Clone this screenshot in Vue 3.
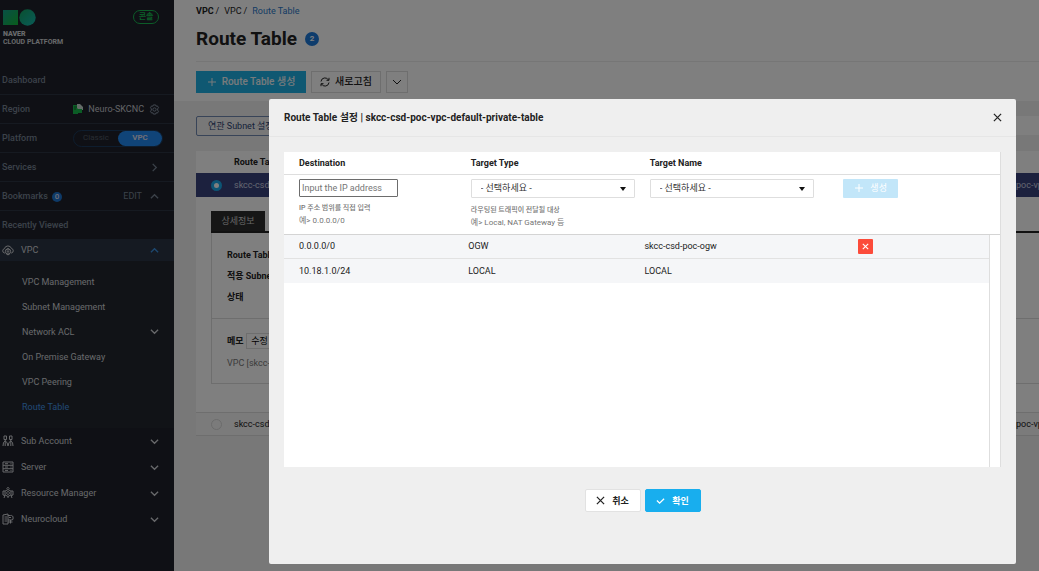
<template>
  <div class="page">
    <aside class="sidebar">
      <div class="brand">
        <div class="brand-top">
          <svg class="logo" viewBox="0 0 33 17">
            <defs>
              <linearGradient id="logoSquare" x1="0" y1="0" x2="1" y2="1">
                <stop offset="0" stop-color="#12a08c" />
                <stop offset="1" stop-color="#12b838" />
              </linearGradient>
              <linearGradient id="logoCircle" x1="0" y1="0" x2="1" y2="1">
                <stop offset="0" stop-color="#12a060" />
                <stop offset="1" stop-color="#14b8b0" />
              </linearGradient>
            </defs>
            <rect x="0" y="1" width="15" height="15" fill="url(#logoSquare)" />
            <circle cx="24.500" cy="8.500" r="8.200" fill="url(#logoCircle)" />
          </svg>
          <a href="#" class="console">콘솔</a>
        </div>
        <strong>NAVER</strong>
        <span>CLOUD PLATFORM</span>
      </div>

      <div class="side-row dashboard">Dashboard</div>
      <div class="side-row">
        <span>Region</span>
        <span class="region">
          <svg class="region-icon" viewBox="0 0 10 10">
            <path d="M0 1h5v9H0z" fill="#16b84a" />
            <path d="M4 0h3l3 3v3H6L4 4z" fill="#c8d8d0" />
            <path d="M4 5h5v4H4z" fill="#16b84a" />
            <path d="M1 3h3M1 5h2" stroke="#0b6a2c" />
          </svg>
          Neuro-SKCNC
          <svg class="gear" viewBox="0 0 12 12">
            <path d="M4.800 1h2.400l.5 1.400 1.500-.3 1.200 2-1 1.200v1.400l1 1.200-1.200 2-1.500-.3-.5 1.400H4.800l-.5-1.400-1.500.3-1.200-2 1-1.200V5.300l-1-1.200 1.200-2 1.500.3z" />
            <circle cx="6" cy="6" r="1.800" />
          </svg>
        </span>
      </div>
      <div class="side-row">
        <span>Platform</span>
        <span class="platform">
          <button type="button">Classic</button>
          <button type="button" class="on">VPC</button>
        </span>
      </div>
      <div class="side-row">
        <span>Services</span>
        <svg class="chevron" viewBox="0 0 10 10"><path d="M3 1l4 4-4 4" /></svg>
      </div>
      <div class="side-row">
        <span>Bookmarks <i class="count">0</i></span>
        <span class="edit">
          EDIT
          <svg class="chevron" viewBox="0 0 10 10"><path d="M1 7l4-4 4 4" /></svg>
        </span>
      </div>
      <div class="side-row">Recently Viewed</div>

      <a href="#" class="menu-item active">
        <svg class="menu-icon" viewBox="0 0 12 12">
          <path d="M3 9H2.500A2.200 2.200 0 0 1 2.400 4.700 3.700 3.700 0 0 1 9.500 4.500 2.300 2.300 0 0 1 9.400 9H9" />
          <circle cx="6" cy="7.500" r="2.600" />
          <circle cx="6" cy="7.500" r=".8" />
          <path d="M3.500 6.200L6 4.500l2.500 1.700M4 9.500l2 1.500 2-1.500" />
        </svg>
        <span>VPC</span>
        <svg class="chevron" viewBox="0 0 10 10"><path d="M1 7l4-4 4 4" /></svg>
      </a>
      <nav class="submenu">
        <a v-for="item in submenu" :key="item.name" href="#" :class="{ current: item.current }">
          {{ item.name }}
          <svg v-if="item.children" class="chevron" viewBox="0 0 10 10"><path d="M1 3l4 4 4-4" /></svg>
        </a>
      </nav>
      <a v-for="item in menu" :key="item.name" href="#" class="menu-item">
        <svg class="menu-icon" viewBox="0 0 12 12">
          <path v-for="(d, i) in item.icon" :key="i" :d="d" />
        </svg>
        <span>{{ item.name }}</span>
        <svg class="chevron" viewBox="0 0 10 10"><path d="M1 3l4 4 4-4" /></svg>
      </a>
    </aside>

    <main class="main">
      <header class="top">
        <div class="breadcrumb">
          <b>VPC</b><i>/</i><span>VPC</span><i>/</i><a href="#">Route Table</a>
        </div>
        <h1>Route Table <span class="badge">2</span></h1>
        <div class="toolbar">
          <button type="button" class="create">
            <svg viewBox="0 0 10 10"><path d="M5 1v8M1 5h8" /></svg>
            Route Table 생성
          </button>
          <button type="button" class="reload">
            <svg viewBox="0 0 10 10">
              <path d="M1 4.500a4 4 0 0 1 7.500-1.500M9 5.500a4 4 0 0 1-7.500 1.500M9 .8v2.500H6.500M1 9.200V6.700h2.500" />
            </svg>
            새로고침
          </button>
          <button type="button" class="more" aria-label="더보기">
            <svg viewBox="0 0 10 10"><path d="M1 3l4 4 4-4" /></svg>
          </button>
        </div>
      </header>

      <section class="content">
        <div class="filters">
          <button type="button" class="subnet">연관 Subnet 설정</button>
          <div class="search"></div>
        </div>
        <div class="list">
          <div class="list-head">Route Table</div>
          <div class="list-row selected">
            <input type="radio" name="route" aria-label="skcc-csd" checked />
            <span>skcc-csd</span>
            <span class="vpc-name">poc-vp</span>
          </div>
          <div class="detail">
            <div class="tabs"><button type="button">상세정보</button></div>
            <div class="detail-body">
              <div class="info">
                <b>Route Table</b>
                <b>적용 Subnet</b>
                <b>상태</b>
              </div>
              <div class="memo">
                <div><b>메모</b><button type="button">수정</button></div>
                <p>VPC [skcc-</p>
              </div>
            </div>
          </div>
          <div class="list-row">
            <input type="radio" name="route" aria-label="skcc-csd" />
            <span>skcc-csd</span>
            <span class="vpc-name">poc-vp</span>
          </div>
        </div>
      </section>
    </main>

    <div class="backdrop">
      <div class="modal" role="dialog" aria-labelledby="modalTitle">
        <div class="modal-head">
          <h2 id="modalTitle">Route Table 설정 | skcc-csd-poc-vpc-default-private-table</h2>
          <button type="button" aria-label="닫기">
            <svg viewBox="0 0 10 10"><path d="M1 1l8 8M9 1L1 9" /></svg>
          </button>
        </div>
        <div class="modal-body">
          <div class="rules">
            <table class="rule-form">
              <thead>
                <tr>
                  <th><label for="destination">Destination</label></th>
                  <th><label for="targetType">Target Type</label></th>
                  <th><label for="targetName">Target Name</label></th>
                  <th></th>
                </tr>
              </thead>
              <tbody>
                <tr>
                  <td>
                    <input id="destination" v-model="destination" type="text" placeholder="Input the IP address" />
                    <p class="desc">IP 주소 범위를 직접 입력</p>
                    <p>예&gt; 0.0.0.0/0</p>
                  </td>
                  <td>
                    <div class="select">
                      <select id="targetType">
                        <option>- 선택하세요 -</option>
                      </select>
                      <svg viewBox="0 0 6 4"><path d="M0 0h6L3 4z" /></svg>
                    </div>
                    <p class="desc">라우팅된 트래픽이 전달될 대상</p>
                    <p>예&gt; Local, NAT Gateway 등</p>
                  </td>
                  <td>
                    <div class="select">
                      <select id="targetName">
                        <option>- 선택하세요 -</option>
                      </select>
                      <svg viewBox="0 0 6 4"><path d="M0 0h6L3 4z" /></svg>
                    </div>
                  </td>
                  <td>
                    <button type="button" class="add" disabled>
                      <svg viewBox="0 0 10 10"><path d="M5 1v8M1 5h8" /></svg>
                      생성
                    </button>
                  </td>
                </tr>
              </tbody>
            </table>
            <div class="rule-scroll">
              <table class="rule-list">
                <tbody>
                  <tr v-for="rule in rules" :key="rule.destination">
                    <td>{{ rule.destination }}</td>
                    <td>{{ rule.type }}</td>
                    <td>{{ rule.name }}</td>
                    <td>
                      <button v-if="rule.removable" type="button" aria-label="삭제" @click="removeRule(rule)">
                        <svg viewBox="0 0 10 10"><path d="M2 2l6 6M8 2L2 8" /></svg>
                      </button>
                    </td>
                  </tr>
                </tbody>
              </table>
            </div>
          </div>
          <div class="actions">
            <button type="button">
              <svg viewBox="0 0 10 10"><path d="M1 1l8 8M9 1L1 9" /></svg>
              취소
            </button>
            <button type="button" class="confirm">
              <svg viewBox="0 0 10 10"><path d="M1 5l3 3 5-5" /></svg>
              확인
            </button>
          </div>
        </div>
      </div>
    </div>
  </div>
</template>

<script setup>
import { ref } from 'vue'

const destination = ref('')

const submenu = [
  { name: 'VPC Management' },
  { name: 'Subnet Management' },
  { name: 'Network ACL', children: true },
  { name: 'On Premise Gateway' },
  { name: 'VPC Peering' },
  { name: 'Route Table', current: true }
]

const menu = [
  {
    name: 'Sub Account',
    icon: [
      'M2 1h2.500v3.500H2zM7.500 1H10v3.500H7.500z',
      'M1 11l.5-3.500L3.200 6 5 7.500 6 11M11 11l-.5-3.500L8.800 6 7 7.500 6 11',
      'M3.200 4.500V11M8.800 4.500V11'
    ]
  },
  {
    name: 'Server',
    icon: ['M1 1h10v10H1z', 'M1 4.300h10M1 7.700h10', 'M3 2.700h3M3 6h3M3 9.400h3M8.500 2.700h1M8.500 6h1M8.500 9.400h1']
  },
  {
    name: 'Resource Manager',
    icon: [
      'M6 2.500l3 1.700v3.600L6 9.500 3 7.800V4.200z',
      'M6 4.600a1.400 1.400 0 1 0 .1 0z',
      'M4.500 1.500L6 .5l1.500 1M1 8V4h2M11 8V4H9M1 8l2 .5M11 8l-2 .5M3 8.500L2 11M9 8.500l1 2.500M6 9.500V11'
    ]
  },
  {
    name: 'Neurocloud',
    icon: [
      'M1 2l5-1v10H1z',
      'M2.500 4H5M2.500 6H5M2.500 8H5',
      'M6 2.500h2.500A2 2 0 0 1 11 5a1.500 1.500 0 0 1-1 2H6',
      'M8.500 7v3.500M6 9h4.500M7 4.500h2'
    ]
  }
]

const rules = ref([
  { destination: '0.0.0.0/0', type: 'OGW', name: 'skcc-csd-poc-ogw', removable: true },
  { destination: '10.18.1.0/24', type: 'LOCAL', name: 'LOCAL', removable: false }
])

function removeRule(rule) {
  rules.value = rules.value.filter((r) => r !== rule)
}
</script>

<style>
body {
  margin: 0;
}
</style>

<style scoped>
.page {
  display: flex;
  height: 100vh;
  overflow: hidden;
  font-family: Roboto, "Noto Sans CJK KR", sans-serif;
  font-size: 9px;
  line-height: 12px;
  color: #222;
}
.page * {
  box-sizing: border-box;
}
a {
  color: inherit;
  text-decoration: none;
}
i {
  font-style: normal;
}
button,
input,
select {
  font-family: inherit;
  font-size: 9px;
  line-height: 12px;
}
button {
  display: flex;
  align-items: center;
  justify-content: center;
  padding: 0;
  border: 0;
  white-space: nowrap;
}
svg {
  width: 10px;
  height: 10px;
  flex: none;
  fill: none;
  stroke: currentColor;
}

/* sidebar */
.sidebar {
  width: 174px;
  flex: none;
  background: #1e212b;
  color: #d0d2d6;
}
.brand {
  display: flex;
  flex-direction: column;
  height: 65px;
  padding: 9px 15px 0 3px;
  font-size: 7px;
  line-height: 8px;
  font-weight: 700;
}
.brand-top {
  display: flex;
  justify-content: space-between;
  margin-bottom: 4px;
}
.brand strong {
  font-weight: 900;
}
.logo {
  width: 33px;
  height: 17px;
  stroke: none;
}
.console {
  width: 26px;
  height: 14px;
  margin-top: 1px;
  border: 1px solid #18b850;
  border-radius: 7px;
  color: #18b850;
  font-size: 8px;
  line-height: 12px;
  text-align: center;
}
.side-row {
  display: flex;
  align-items: center;
  justify-content: space-between;
  height: 29px;
  padding: 0 15px 0 2px;
  border-top: 1px solid #2c3442;
  color: #788494;
  font-weight: 500;
}
.side-row.dashboard {
  border-top: 0;
}
.region {
  display: flex;
  align-items: center;
  gap: 5px;
  margin-right: -1px;
  color: #c4c6cc;
  font-weight: 400;
}
.region-icon {
  stroke: none;
}
.gear {
  width: 11px;
  height: 11px;
  color: #8c98aa;
}
.platform {
  display: flex;
  width: 90px;
  height: 17px;
  margin-right: -4px;
  border: 1px solid #1d3a5c;
  border-radius: 9px;
}
.platform button {
  flex: 1;
  border-radius: 8px;
  background: none;
  color: #525a66;
  font-size: 8px;
}
.platform .on {
  background: #2088f0;
  color: #dde;
  font-weight: 700;
}
.chevron {
  width: 9px;
  height: 9px;
  stroke-width: 1.4;
}
.count {
  display: inline-block;
  width: 10px;
  margin-left: 2px;
  border-radius: 5px;
  background: #1c74d0;
  color: #dde;
  font-size: 8px;
  line-height: 10px;
  text-align: center;
}
.edit {
  display: flex;
  align-items: center;
  gap: 8px;
  font-weight: 400;
}
.menu-item {
  display: flex;
  align-items: center;
  height: 26px;
  padding: 0 15px 0 2px;
}
.menu-item span {
  flex: 1;
  margin-left: 7px;
}
.menu-item.active {
  height: 22px;
  background: #2a3444;
}
.menu-item.active .chevron {
  color: #3a90e0;
}
.menu-icon {
  width: 12px;
  height: 12px;
}
.submenu {
  padding: 8px 15px 9px 22px;
  background: #22272f;
}
.submenu a {
  display: flex;
  align-items: center;
  justify-content: space-between;
  height: 25px;
}
.submenu .current {
  color: #4294e4;
}

/* page behind the dialog */
.main {
  flex: 1;
  min-width: 0;
  display: flex;
  flex-direction: column;
  background: #f0f0f0;
}
.top {
  height: 101px;
  padding: 5px 0 0 22px;
  background: #fff;
}
.breadcrumb i {
  margin: 0 5px 0 2px;
}
.breadcrumb a {
  color: #2a78c8;
}
h1 {
  display: flex;
  align-items: center;
  height: 45px;
  margin: 0;
  border-bottom: 1px solid #ececec;
  font-size: 19px;
  line-height: 24px;
}
.badge {
  width: 14px;
  margin-left: 8px;
  border-radius: 7px;
  background: #1c78d8;
  color: #fff;
  font-size: 8px;
  line-height: 14px;
  text-align: center;
}
.toolbar {
  display: flex;
  gap: 5px;
  padding-top: 9px;
}
.toolbar button {
  height: 22px;
  gap: 5px;
  border: 1px solid #dcdcdc;
  background: #fff;
  color: #222;
  font-size: 10px;
  font-weight: 500;
}
.toolbar .create {
  width: 110px;
  border-color: #1eb0e4;
  background: #1eb0e4;
  color: #f0f6f8;
}
.toolbar .reload {
  width: 70px;
}
.toolbar .more {
  width: 22px;
}
.content {
  padding: 15px 0 0 22px;
}
.filters {
  display: flex;
  justify-content: space-between;
  margin-bottom: 15px;
}
.subnet {
  height: 20px;
  padding: 0 11px;
  border: 1px solid #7088b0;
  border-radius: 2px;
  background: none;
  color: #2c4470;
}
.search {
  width: 200px;
  height: 19px;
  background: #fff;
}
.list {
  background: #fff;
}
.list-head {
  padding: 5px 0 5px 38px;
  font-weight: 700;
}
.list-row {
  display: flex;
  align-items: center;
  height: 24px;
  padding-left: 15px;
  border-top: 1px solid #dcdcdc;
  border-bottom: 1px solid #dcdcdc;
  background: #f6f6f6;
}
.list-row.selected {
  border-color: #38427c;
  background: #38427c;
  color: #c8cce0;
}
.list-row input {
  appearance: none;
  width: 11px;
  height: 11px;
  margin: 0 12px 0 0;
  border: 1px solid #d8d8d8;
  border-radius: 50%;
}
.list-row input:checked {
  border: 3px solid #18a8e8;
  background: #fff;
}
.vpc-name {
  width: 23px;
  margin-left: auto;
  white-space: nowrap;
}
.detail {
  padding: 14px 0 28px 15px;
}
.tabs {
  border-bottom: 2px solid #222;
}
.tabs button {
  width: 54px;
  height: 20px;
  background: #2c2c2c;
  color: #ccc;
}
.detail-body {
  border: 1px solid #dcdcdc;
  border-width: 0 0 1px 1px;
}
.info {
  display: flex;
  flex-direction: column;
  gap: 9px;
  padding: 16px 15px 15px;
  border-bottom: 1px solid #dcdcdc;
}
.memo {
  padding: 14px 15px;
}
.memo div {
  display: flex;
  align-items: center;
  gap: 2px;
}
.memo button {
  width: 28px;
  height: 16px;
  border: 1px solid #dcdcdc;
  background: none;
}
.memo p {
  margin: 8px 0 0;
  color: #777;
}

/* dialog */
.backdrop {
  position: fixed;
  inset: 0;
  display: flex;
  padding: 99px 23px 7px 269px;
  background: rgba(0, 0, 0, 0.5);
}
.modal {
  flex: 1;
  display: flex;
  flex-direction: column;
  border-radius: 2px;
  background: #efefef;
}
.modal-head {
  display: flex;
  align-items: center;
  justify-content: space-between;
  height: 38px;
  padding: 0 14px 0 15px;
  border-bottom: 1px solid #e6e6e6;
}
.modal-head h2 {
  margin: 0;
  font-size: 10px;
  font-weight: 700;
}
.modal-head button {
  background: none;
  color: #222;
}
.modal-head svg {
  width: 9px;
  height: 9px;
  stroke-width: 1.4;
}
.modal-body {
  flex: 1;
  display: flex;
  flex-direction: column;
  padding: 15px 15px 52px;
}
.rules {
  flex: 1;
  display: flex;
  flex-direction: column;
  border-right: 1px solid #dedede;
  background: #fff;
}
table {
  width: 100%;
  border-collapse: collapse;
  table-layout: fixed;
}
th,
td {
  padding: 0 0 0 15px;
  text-align: left;
}
th:nth-child(1),
td:nth-child(1) {
  width: 24%;
}
th:nth-child(2),
td:nth-child(2) {
  width: 25%;
}
th:nth-child(3) {
  width: 27%;
}
.rule-list td:nth-child(3) {
  width: 30%;
}
.rule-form th {
  height: 22px;
  border-bottom: 1px solid #dedede;
  font-weight: 700;
}
.rule-form td {
  height: 60px;
  padding-top: 4px;
  border-bottom: 1px solid #d4d4d4;
  vertical-align: top;
}
.rule-form input {
  display: block;
  width: 99px;
  height: 18px;
  margin-bottom: 5px;
  padding: 0 2px;
  border: 1px solid #6c6c6c;
  border-radius: 1px;
}
.rule-form input::placeholder {
  color: #757575;
}
.rule-form p {
  margin: 0 0 1px;
  color: #757575;
  font-size: 8px;
}
.rule-form .desc {
  font-size: 7px;
  font-weight: 500;
}
.select {
  position: relative;
  width: 164px;
  margin-bottom: 6px;
}
.select select {
  display: block;
  appearance: none;
  width: 100%;
  height: 19px;
  padding: 0 9px;
  border: 1px solid #dedede;
  border-radius: 1px;
  background: #fff;
  color: #333;
}
.select svg {
  position: absolute;
  top: 8px;
  right: 9px;
  width: 6px;
  height: 4px;
  fill: #111;
  stroke: none;
}
.add {
  width: 55px;
  height: 19px;
  gap: 6px;
  border-radius: 1px;
  background: #c2e6f9;
  color: #fff;
}
.rule-scroll {
  flex: 1;
  margin-right: 10px;
  border-right: 1px solid #dedede;
}
.rule-list tr {
  border-bottom: 1px solid #e2e2e2;
  background: #f5f6f8;
}
.rule-list tr:last-child {
  border-bottom: 0;
}
.rule-list td {
  height: 24px;
}
.rule-list td:last-child {
  padding-left: 17px;
}
.rule-list button {
  width: 15px;
  height: 15px;
  border-radius: 1px;
  background: #fc4b3a;
  color: #fff;
}
.rule-list svg {
  width: 9px;
  height: 9px;
  stroke-width: 1.2;
}
.actions {
  display: flex;
  justify-content: center;
  gap: 4px;
  padding-top: 22px;
}
.actions button {
  width: 56px;
  height: 23px;
  gap: 7px;
  border: 1px solid #e2e2e2;
  border-radius: 2px;
  background: #fff;
  color: #222;
  font-weight: 700;
}
.actions .confirm {
  border-color: #18aeee;
  background: #18aeee;
  color: #fff;
}
.actions svg {
  width: 9px;
  height: 9px;
  stroke-width: 1.4;
}
</style>
